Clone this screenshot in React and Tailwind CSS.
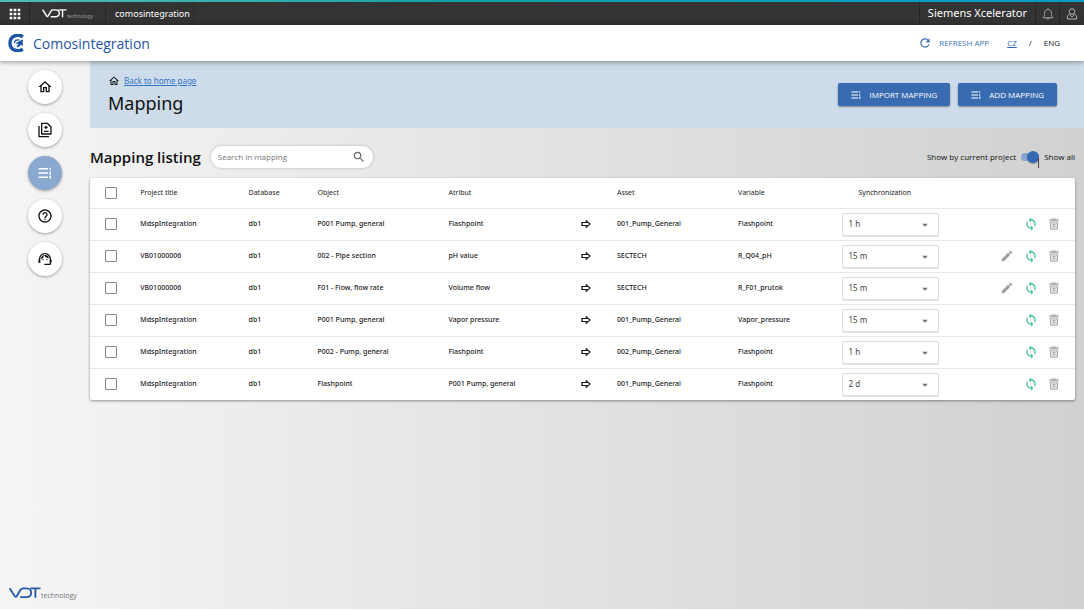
import React, { useState } from 'react';
import {
  MdApps,
  MdOutlineHome,
  MdHelpOutline,
  MdSupportAgent,
  MdSearch,
  MdRefresh,
  MdEdit,
  MdSync,
  MdArrowDropDown,
} from 'react-icons/md';

const rows = [
  { title: 'MdspIntegration', db: 'db1', object: 'P001 Pump, general', atribut: 'Flashpoint', asset: '001_Pump_General', variable: 'Flashpoint', sync: '1 h' },
  { title: 'VB01000006', db: 'db1', object: '002 - Pipe section', atribut: 'pH value', asset: 'SECTECH', variable: 'R_Q04_pH', sync: '15 m', editable: true },
  { title: 'VB01000006', db: 'db1', object: 'F01 - Flow, flow rate', atribut: 'Volume flow', asset: 'SECTECH', variable: 'R_F01_prutok', sync: '15 m', editable: true },
  { title: 'MdspIntegration', db: 'db1', object: 'P001 Pump, general', atribut: 'Vapor pressure', asset: '001_Pump_General', variable: 'Vapor_pressure', sync: '15 m' },
  { title: 'MdspIntegration', db: 'db1', object: 'P002 - Pump, general', atribut: 'Flashpoint', asset: '002_Pump_General', variable: 'Flashpoint', sync: '1 h' },
  { title: 'MdspIntegration', db: 'db1', object: 'Flashpoint', atribut: 'P001 Pump, general', asset: '001_Pump_General', variable: 'Flashpoint', sync: '2 d' },
];

const intervals = ['15 m', '1 h', '2 d'];

const VdtMark = ({ className }) => (
  <svg viewBox="0 0 33 12" className={className} fill="none" stroke="currentColor" strokeWidth="1.9" aria-hidden="true">
    <path d="M.7 1 6 9.300Q7 10.800 8 9.300L12 2.500Q12.900 1.200 14.500 1.200H18C24.500 1.200 24.500 10.300 18 10.300H11.500" />
    <path d="M22 1.200H32.500M27.200 1.200V11" />
  </svg>
);

const CLogo = () => (
  <svg viewBox="0 0 16 18" className="w-4 h-[18px] text-[#1d55a5]" fill="none" stroke="currentColor" aria-hidden="true">
    <path d="M14.800 2.800C10.500-.2 2 1 2 9s8.500 9.200 12.800 6.200" strokeWidth="3.400" />
    <path d="M11.500 6.200C8.500 5.200 6.500 6.800 6.300 9" strokeWidth="1.400" />
    <path d="M7 9.500 14.800 5.300v7l-1.800-1.500-3 2.700-1.600-1.600 2.200-2z" fill="currentColor" stroke="none" />
  </svg>
);

const ListIcon = ({ className }) => (
  <svg viewBox="0 0 24 24" className={className} fill="currentColor" aria-hidden="true">
    <path d="M1 3.500h16v2.600H1zM1 10.700h16v2.600H1zM1 17.900h16v2.600H1zM19 3h3v5h-1.500V4.500H19zM19 10h3.500v1.400l-2 2.100h2V15H19v-1.400l2-2.100h-2zM19 16.500h3.500v5H19v-1.300h2v-.6h-1v-1.200h1v-.6h-2z" />
  </svg>
);

const FilesIcon = () => (
  <svg viewBox="0 0 24 24" className="w-4 h-4" fill="none" stroke="currentColor" strokeWidth="2" aria-hidden="true">
    <path d="M7 2h8.500L21 7.500V18H7zM3 6v16h15" strokeLinejoin="round" />
    <path d="M11 8h5M13.500 5.500v5M10.500 14h7" />
  </svg>
);

const BlockArrow = () => (
  <svg viewBox="0 0 10 8" className="w-[10px] h-2" fill="none" stroke="#111" strokeWidth="1.200" aria-hidden="true">
    <path d="M1 2.500h4.300V.9L8.900 4 5.300 7.100V5.500H1z" />
  </svg>
);

const TrashIcon = () => (
  <svg viewBox="0 0 24 24" className="w-3 h-3" fill="none" stroke="currentColor" strokeWidth="2" aria-hidden="true">
    <path d="M3 4h18" strokeWidth="3" />
    <path d="M8.500 2h7M5.500 8h13v14h-13z" strokeWidth="2.400" />
    <path d="m9 12 6 6m0-6-6 6M9 12h6M9 18h6" />
  </svg>
);

const BellIcon = () => (
  <svg viewBox="0 0 24 24" className="w-3 h-3" fill="none" stroke="currentColor" strokeWidth="1.600" aria-hidden="true">
    <path d="M2 19.500h20c-3-2.500-3-5-3-9 0-4.500-3-7.500-7-7.500s-7 3-7 7.500c0 4 0 6.500-3 9zM12 3V.8M9.500 20c.3 3 4.700 3 5 0" />
  </svg>
);

const UserIcon = () => (
  <svg viewBox="0 0 24 24" className="w-3 h-3" fill="none" stroke="currentColor" strokeWidth="1.800" aria-hidden="true">
    <circle cx="12" cy="7" r="5.500" />
    <path d="M8 11.500C4 13 2.500 16 2.500 22h19c0-6-1.500-9-5.500-10.500M8 14l4 4 4-4" />
  </svg>
);

const navItems = [
  { label: 'Home', icon: <MdOutlineHome className="w-4 h-4" /> },
  { label: 'Files', icon: <FilesIcon /> },
  { label: 'Mapping', icon: <ListIcon className="w-[14px] h-[14px]" />, active: true },
  { label: 'Help', icon: <MdHelpOutline className="w-4 h-4" /> },
  { label: 'Support', icon: <MdSupportAgent className="w-4 h-4" /> },
];

const TopBar = () => (
  <div className="bg-[#333] text-white">
    <div className="h-[2px] bg-linear-to-r from-[#4dbdb8] via-[#0fa3a8] via-40% to-[#0a9bca]" />
    <div className="flex items-stretch h-[23px]">
      <button aria-label="Apps" className="w-[30px] flex items-center justify-center border-r border-[#262626]">
        <MdApps className="w-4 h-4" />
      </button>
      <div className="w-[76px] pl-3 flex items-center border-r border-[#262626]">
        <VdtMark className="w-[25px] h-[9px]" />
        <span className="text-[5px] leading-[8px] mt-1 text-[#999]">technology</span>
      </div>
      <div className="w-[88px] pl-[9px] flex items-center text-[9px] border-r border-[#2c2c2c]">comosintegration</div>
      <div className="ml-auto px-2 flex items-center text-[11px] border-x border-[#262626]">Siemens Xcelerator</div>
      <button aria-label="Notifications" className="w-6 flex items-center justify-center text-[#bbb] border-r border-[#262626]">
        <BellIcon />
      </button>
      <button aria-label="Account" className="w-6 flex items-center justify-center text-[#bbb]">
        <UserIcon />
      </button>
    </div>
  </div>
);

const Header = () => (
  <header className="relative z-10 h-9 bg-white shadow-[0_1px_5px_rgba(0,0,0,0.4)] flex items-center pl-2 pr-6 font-['Open_Sans',sans-serif]">
    <CLogo />
    <span className="ml-[9px] text-[14px] font-medium text-[#1d55a5]">Comosintegration</span>
    <button className="ml-auto flex items-center gap-[7px] text-[8px] font-medium text-[#4274b5]">
      <MdRefresh className="w-[14px] h-[14px]" />
      REFRESH APP
    </button>
    <div className="ml-[18px] flex items-center gap-3 text-[8px] font-medium">
      <a href="#cz" className="underline text-[#3068b0]">CZ</a>
      <span>/</span>
      <a href="#eng">ENG</a>
    </div>
  </header>
);

const ActionButton = ({ children }) => (
  <button className="h-[23px] px-[13px] flex items-center gap-2 rounded-xs bg-[#386bb0] text-white text-[8px] font-medium font-['Open_Sans',sans-serif] shadow-[0_1px_2px_rgba(0,0,0,0.4)]">
    <ListIcon className="w-[10px] h-[10px]" />
    {children}
  </button>
);

const Checkbox = ({ label }) => (
  <input type="checkbox" aria-label={label} className="block appearance-none w-3 h-3 ml-[15px] border border-[#888] rounded-[1px] bg-white checked:bg-[#386bb0]" />
);

const MappingTable = () => (
  <table className="w-full table-fixed bg-white rounded-xs shadow-[0_1px_3px_rgba(0,0,0,0.4)] text-[7px] font-medium text-[#222] text-left">
    <colgroup>
      <col className="w-[5.1%]" />
      <col className="w-[11%]" />
      <col className="w-[7%]" />
      <col className="w-[13.3%]" />
      <col className="w-[13.5%]" />
      <col className="w-[3.6%]" />
      <col className="w-[12.3%]" />
      <col className="w-[10.5%]" />
      <col className="w-[9.9%]" />
      <col />
    </colgroup>
    <thead>
      <tr className="h-[30px] border-b border-[#e8e8e8]">
        <th><Checkbox label="Select all" /></th>
        <th className="font-normal">Project title</th>
        <th className="font-normal">Database</th>
        <th className="font-normal">Object</th>
        <th className="font-normal">Atribut</th>
        <th />
        <th className="font-normal">Asset</th>
        <th className="font-normal">Variable</th>
        <th className="font-normal pl-[17px]">Synchronization</th>
        <th />
      </tr>
    </thead>
    <tbody>
      {rows.map((row, i) => (
        <tr key={i} className="h-8 border-b border-[#e8e8e8] last:border-b-0">
          <td><Checkbox label={`Select row ${i + 1}`} /></td>
          <td>{row.title}</td>
          <td>{row.db}</td>
          <td>{row.object}</td>
          <td>{row.atribut}</td>
          <td><BlockArrow /></td>
          <td>{row.asset}</td>
          <td>{row.variable}</td>
          <td>
            <div className="relative">
              <select
                aria-label="Synchronization"
                defaultValue={row.sync}
                className="block appearance-none w-full h-[23px] pl-[6px] rounded-xs border border-[#ddd] bg-white shadow-[0_1px_1px_rgba(0,0,0,0.1)] text-[8px] font-normal text-[#444]"
              >
                {intervals.map((v) => <option key={v}>{v}</option>)}
              </select>
              <MdArrowDropDown className="absolute right-[7px] top-[5px] w-[14px] h-[14px] text-[#777] pointer-events-none" />
            </div>
          </td>
          <td>
            <div className="flex items-center justify-end gap-[10px] pr-[15px] text-[#a0a0a0]">
              {row.editable && (
                <button aria-label="Edit"><MdEdit className="w-[14px] h-[14px]" /></button>
              )}
              <button aria-label="Synchronize" className="text-[#35bd98]"><MdSync className="w-[14px] h-[14px]" /></button>
              <button aria-label="Delete"><TrashIcon /></button>
            </div>
          </td>
        </tr>
      ))}
    </tbody>
  </table>
);

const App = () => {
  const [showAll, setShowAll] = useState(true);

  return (
    <div className="min-h-screen flex flex-col border-b border-white font-['Noto_Sans','Open_Sans',sans-serif] text-[#111] bg-linear-to-r from-[#f5f5f5] to-[#d1d1d1]">
      <TopBar />
      <Header />
      <div className="flex-1 flex">
        <aside className="w-[90px] shrink-0 flex flex-col">
          <nav className="flex flex-col items-center gap-[9px] pt-[9px]">
            {navItems.map((item) => (
              <a
                key={item.label}
                href="#nav"
                aria-label={item.label}
                className={`w-[34px] h-[34px] rounded-full flex items-center justify-center shadow-[0_1px_3px_rgba(0,0,0,0.35)] ${
                  item.active ? 'bg-[#8aa8d0] text-white' : 'bg-white'
                }`}
              >
                {item.icon}
              </a>
            ))}
          </nav>
          <div className="mt-auto pl-[9px] pb-[7px] flex items-end">
            <VdtMark className="w-8 h-3 mb-[3px] text-[#2459a5]" />
            <span className="text-[7px] leading-[12px] text-[#777] font-['Open_Sans',sans-serif]">technology</span>
          </div>
        </aside>

        <main className="flex-1 min-w-0">
          <section className="h-[67px] pl-[18px] pr-[27px] bg-[#cedbea] flex items-center justify-between">
            <div>
              <div className="flex items-center gap-1 text-[8px]">
                <MdOutlineHome className="w-3 h-3" />
                <a href="#home" className="underline text-[#2e75c5]">Back to home page</a>
              </div>
              <h1 className="mt-1 text-[18px] leading-[24px]">Mapping</h1>
            </div>
            <div className="flex gap-2">
              <ActionButton>IMPORT MAPPING</ActionButton>
              <ActionButton>ADD MAPPING</ActionButton>
            </div>
          </section>

          <section className="pr-[9px]">
            <div className="flex items-center pt-[18px] pb-[10px] font-['Open_Sans',sans-serif]">
              <h2 className="text-[15px] leading-[22px] font-semibold">Mapping listing</h2>
              <label className="ml-[10px] w-[162px] h-[22px] pl-[7px] pr-[7px] flex items-center rounded-full bg-white shadow-[0_0_3px_rgba(0,0,0,0.25)]">
                <input
                  aria-label="Search in mapping"
                  placeholder="Search in mapping"
                  className="flex-1 min-w-0 text-[8px] outline-none placeholder:text-[#777]"
                />
                <MdSearch className="w-[14px] h-[14px] text-[#666]" />
              </label>
              <label className="ml-auto flex items-center gap-[5px] text-[8px] font-medium">
                Show by current project
                <span className="relative flex items-center w-[18px] h-3">
                  <input
                    type="checkbox"
                    role="switch"
                    checked={showAll}
                    onChange={(e) => setShowAll(e.target.checked)}
                    className="peer appearance-none w-[18px] h-2 rounded-full bg-[#88a5cd]"
                  />
                  <span className="absolute left-0 peer-checked:left-[6px] w-3 h-3 rounded-full bg-[#346ab2] shadow-[0_1px_1px_rgba(0,0,0,0.3)]" />
                  <span className="absolute right-0 top-[7px] w-px h-[10px] bg-[#444]" />
                </span>
                Show all
              </label>
            </div>
            <MappingTable />
          </section>
        </main>
      </div>
    </div>
  );
};

export default App;
